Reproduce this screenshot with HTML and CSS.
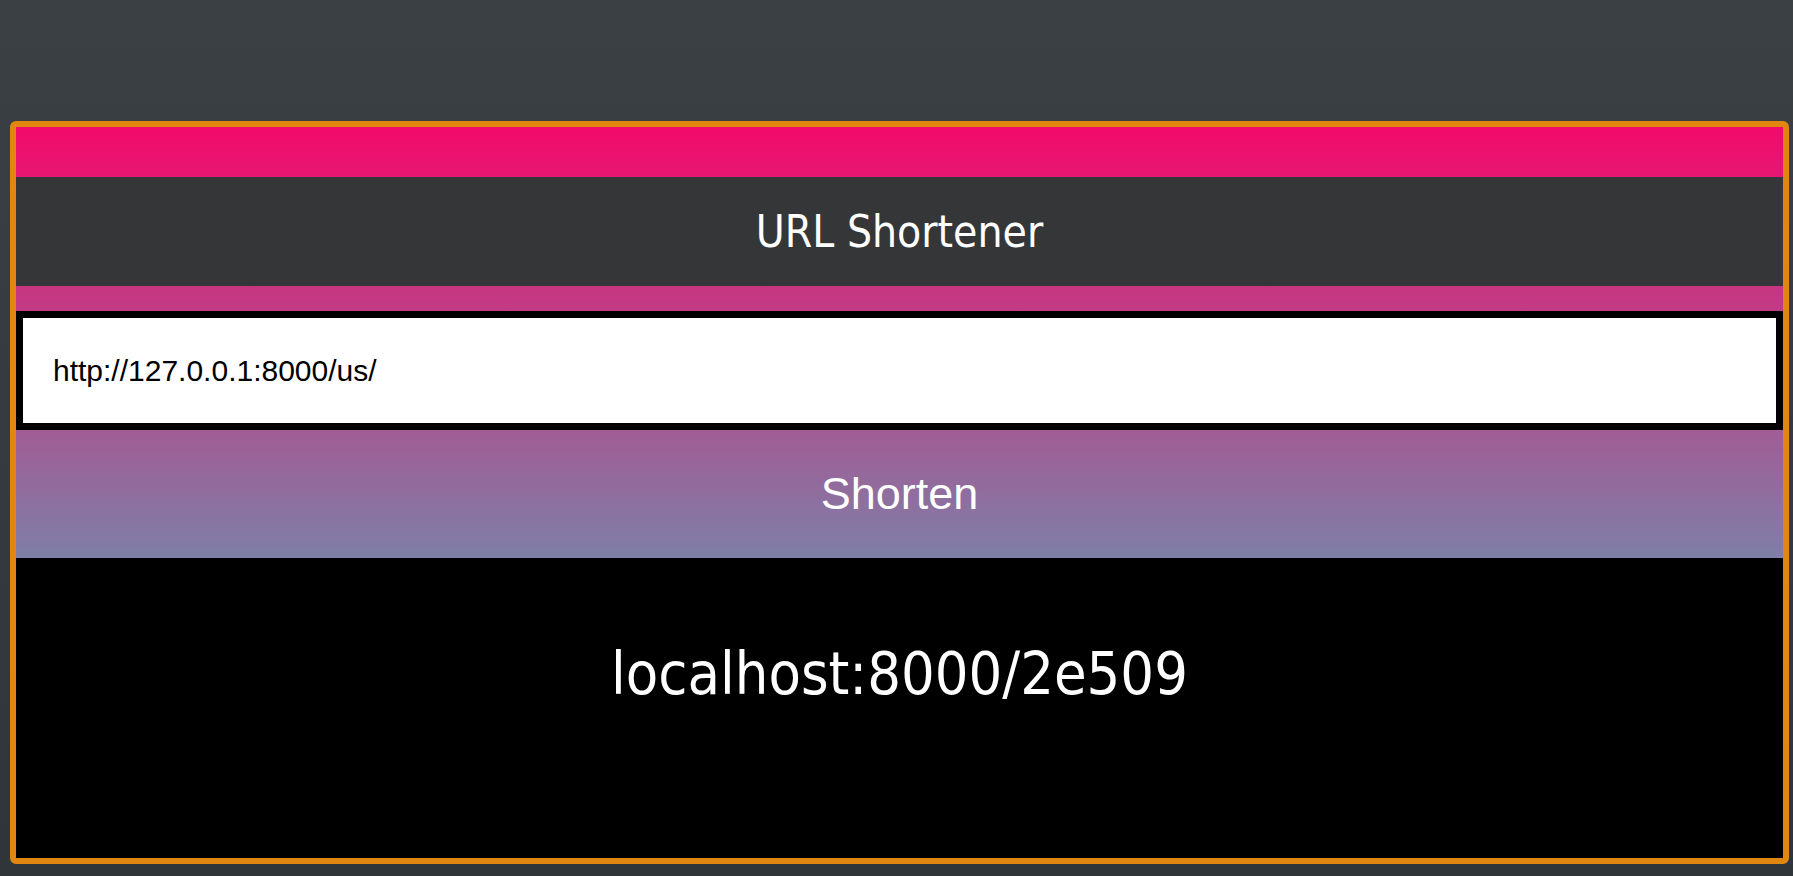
FILE: index.html
```html
<!DOCTYPE html>
<html lang="en">
<head>
<meta charset="utf-8">
<title>URL Shortener</title>
<link rel="stylesheet" href="styles.css">
</head>
<body>
  <main class="card">
    <form class="form">
      <div class="top-band"></div>
      <h1 class="title">URL Shortener</h1>
      <div class="mid-band"></div>
      <input class="url-input" type="text" value="http://127.0.0.1:8000/us/">
      <button class="shorten-btn" type="button">Shorten</button>
    </form>
    <section class="result">
      <p class="short-url">localhost:8000/2e509</p>
    </section>
  </main>
</body>
</html>
```

FILE: styles.css
```css
html, body {
  margin: 0;
  padding: 0;
}

body {
  min-height: 100vh;
  background: linear-gradient(#3b4045, #30353a);
  padding-top: 121px;
  padding-bottom: 12px;
  box-sizing: border-box;
}

.card {
  margin: 0 4px 0 10px;
  border: 6px solid #e1870f;
  border-radius: 6px;
  background: #000;
  display: flex;
  flex-direction: column;
  overflow: hidden;
}

.form {
  margin: 0;
  display: flex;
  flex-direction: column;
  background: linear-gradient(#f30a6a, #7e7fa7);
}

.top-band {
  height: 50px;
}

.title {
  margin: 0;
  height: 109px;
  line-height: 109px;
  background: #343638;
  color: #fff;
  text-align: center;
  font-family: "DejaVu Sans Condensed", "DejaVu Sans", sans-serif;
  font-stretch: condensed;
  font-weight: normal;
  font-size: 44px;
}

.mid-band {
  height: 25px;
}

.url-input {
  display: block;
  width: 100%;
  height: 119px;
  box-sizing: border-box;
  margin: 0;
  border: 7px solid #000;
  background: #fff;
  padding: 0 0 0 30px;
  font-family: "Liberation Sans", Arial, sans-serif;
  font-size: 30px;
  color: #000;
  outline: none;
}

.shorten-btn {
  display: block;
  width: 100%;
  height: 128px;
  margin: 0;
  padding: 0;
  border: none;
  background: transparent;
  color: #fff;
  font-family: "Liberation Sans", Arial, sans-serif;
  font-size: 45px;
  cursor: pointer;
}

.result {
  height: 300px;
  box-sizing: border-box;
  padding-top: 82px;
  background: #000;
}

.short-url {
  margin: 0;
  color: #fff;
  text-align: center;
  font-family: "DejaVu Sans Condensed", "DejaVu Sans", sans-serif;
  font-stretch: condensed;
  font-size: 59px;
  line-height: 68px;
}
```
